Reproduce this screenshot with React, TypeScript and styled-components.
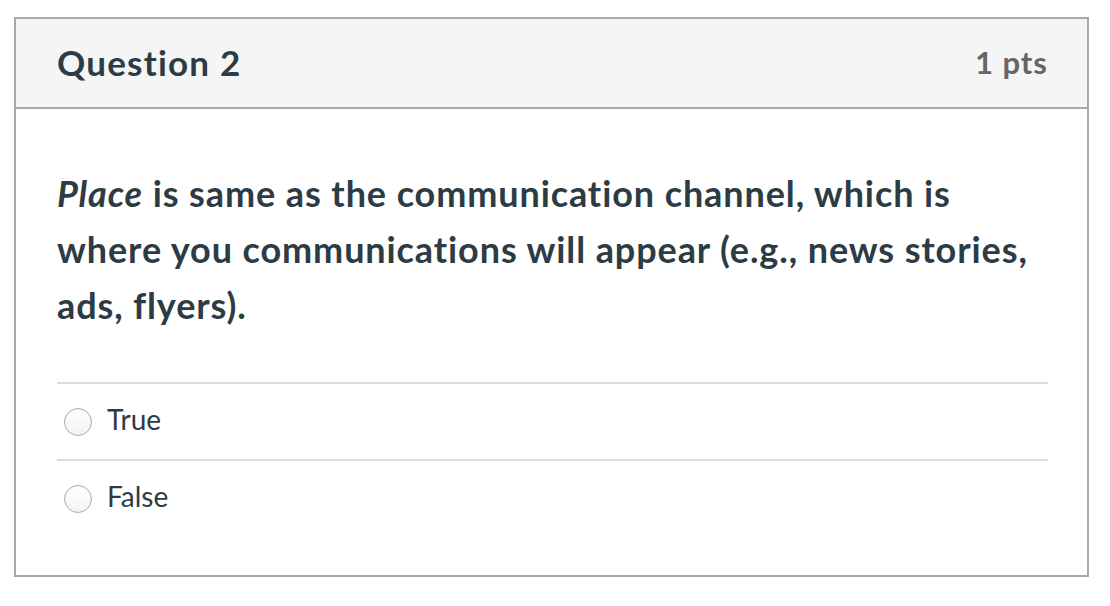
import React from "react";
import styled, { createGlobalStyle } from "styled-components";

const Global = createGlobalStyle`
  html, body { margin: 0; padding: 0; background: #fff; }
  body { font-family: Lato, "Noto Sans", sans-serif; color: #2d3b45; }
`;

const Page = styled.div`
  padding: 17px 21px 0 14px;
`;

const Card = styled.div`
  width: 1075px;
  border: 2px solid #a8a8a8;
  box-sizing: border-box;
  background: #fff;
`;

const Header = styled.div`
  display: flex;
  align-items: center;
  justify-content: space-between;
  height: 90px;
  box-sizing: border-box;
  padding: 0 39px 2px 41px;
  background: #f5f5f5;
  border-bottom: 2px solid #a8a8a8;
`;

const Title = styled.h2`
  margin: 0;
  font-size: 35px;
  font-weight: 700;
  color: #2d3b45;
  letter-spacing: 1.2px;
`;

const Points = styled.div`
  font-size: 31px;
  font-weight: 700;
  color: #666;
  letter-spacing: 1px;
`;

const Body = styled.div`
  padding: 56px 39px 39px 41px;
`;

const QuestionText = styled.p`
  margin: 0 0 49px;
  font-size: 36px;
  line-height: 56px;
  font-weight: 700;
  letter-spacing: 0.9px;
  color: #2d3b45;
  em { font-style: italic; }
`;

const Answers = styled.div`
  display: flex;
  flex-direction: column;
`;

const Answer = styled.label`
  display: flex;
  align-items: center;
  height: 77px;
  box-sizing: border-box;
  border-top: 2px solid #dcdcdc;
  padding-left: 7px;
  gap: 15px;
  font-size: 28px;
  color: #2d3b45;
`;

const AnswerText = styled.span`
  margin-bottom: 5px;
`;

const Radio = styled.span`
  width: 28px;
  height: 28px;
  border-radius: 50%;
  box-sizing: border-box;
  border: 1px solid #adadad;
  background: linear-gradient(#ffffff, #f3f3f3);
  box-shadow: inset 0 1px 1px rgba(0, 0, 0, 0.05);
`;

export default function App() {
  return (
    <>
      <Global />
      <Page>
        <Card>
          <Header>
            <Title>Question 2</Title>
            <Points>1 pts</Points>
          </Header>
          <Body>
            <QuestionText>
              <em>Place</em> is same as the communication channel, which is
              where you communications will appear (e.g., news stories,
              ads, flyers).
            </QuestionText>
            <Answers>
              <Answer>
                <Radio />
                <AnswerText>True</AnswerText>
              </Answer>
              <Answer>
                <Radio />
                <AnswerText>False</AnswerText>
              </Answer>
            </Answers>
          </Body>
        </Card>
      </Page>
    </>
  );
}
